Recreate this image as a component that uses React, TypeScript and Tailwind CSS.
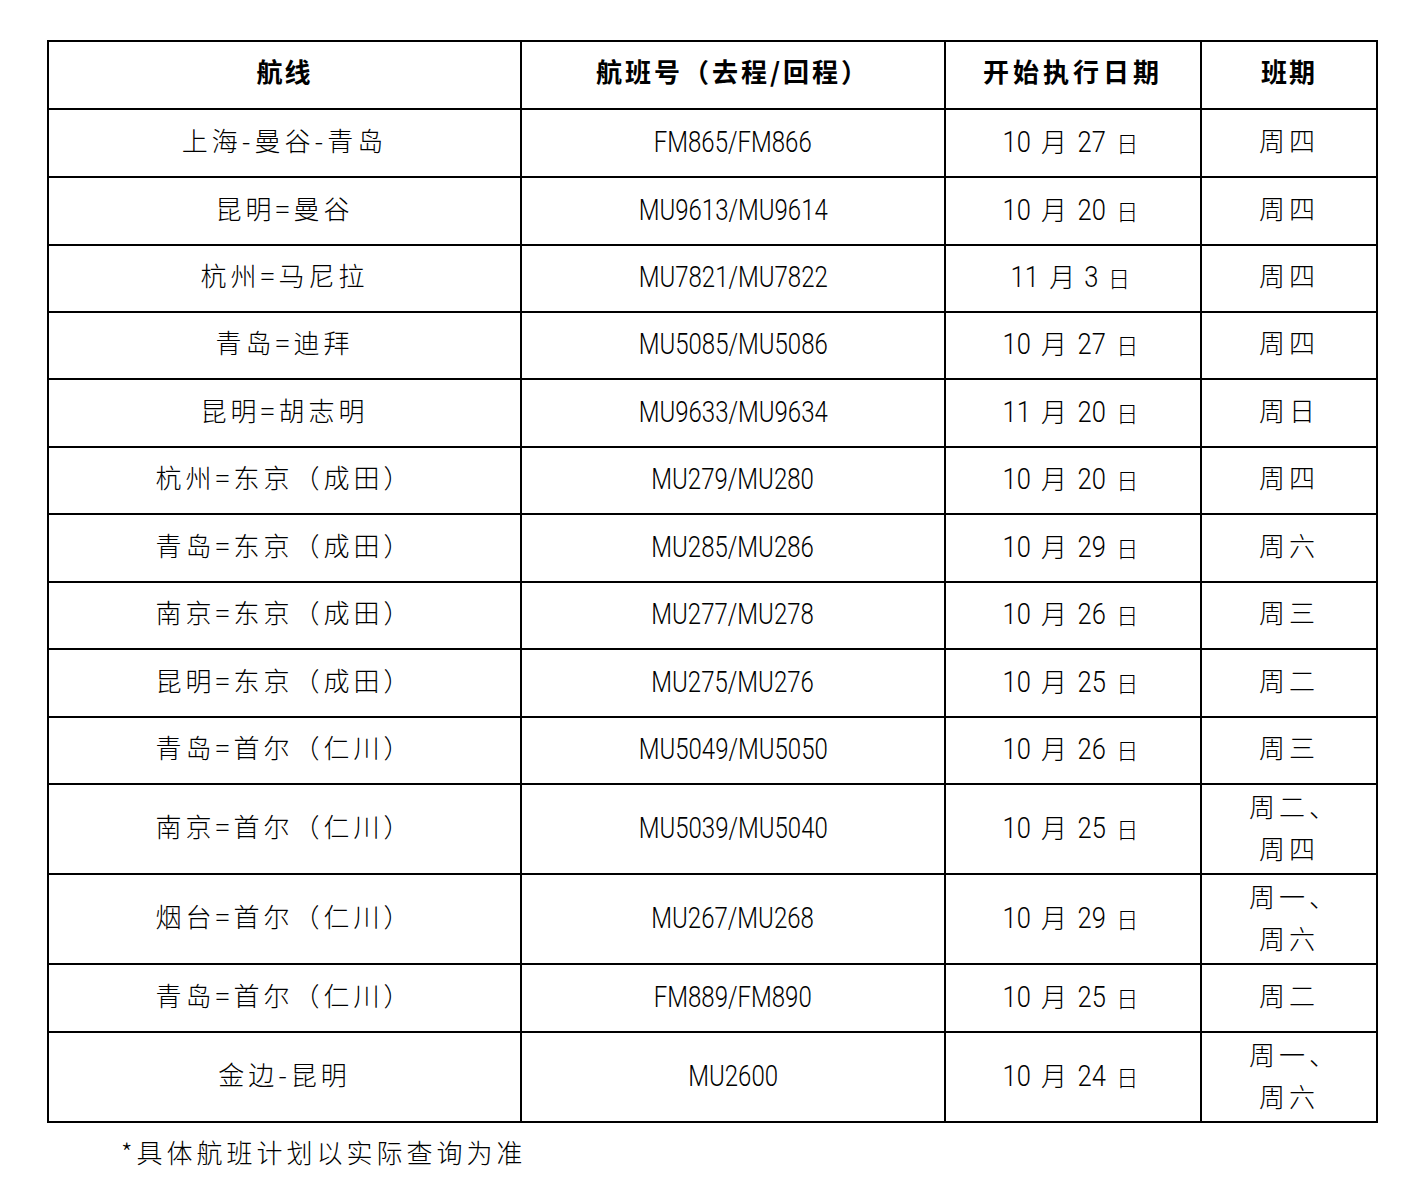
const rows: [string, string, string, string[], number][] = [
  ['上海-曼谷-青岛', 'FM865/FM866', '10 月 27 日', ['周四'], 68],
  ['昆明=曼谷', 'MU9613/MU9614', '10 月 20 日', ['周四'], 68],
  ['杭州=马尼拉', 'MU7821/MU7822', '11 月 3 日', ['周四'], 67],
  ['青岛=迪拜', 'MU5085/MU5086', '10 月 27 日', ['周四'], 67],
  ['昆明=胡志明', 'MU9633/MU9634', '11 月 20 日', ['周日'], 68],
  ['杭州=东京（成田）', 'MU279/MU280', '10 月 20 日', ['周四'], 67],
  ['青岛=东京（成田）', 'MU285/MU286', '10 月 29 日', ['周六'], 68],
  ['南京=东京（成田）', 'MU277/MU278', '10 月 26 日', ['周三'], 67],
  ['昆明=东京（成田）', 'MU275/MU276', '10 月 25 日', ['周二'], 68],
  ['青岛=首尔（仁川）', 'MU5049/MU5050', '10 月 26 日', ['周三'], 67],
  ['南京=首尔（仁川）', 'MU5039/MU5040', '10 月 25 日', ['周二、', '周四'], 90],
  ['烟台=首尔（仁川）', 'MU267/MU268', '10 月 29 日', ['周一、', '周六'], 90],
  ['青岛=首尔（仁川）', 'FM889/FM890', '10 月 25 日', ['周二'], 68],
  ['金边-昆明', 'MU2600', '10 月 24 日', ['周一、', '周六'], 90],
];

const cjk = "font-['Noto_Sans_CJK_SC',sans-serif]";
const num = "font-['Roboto','Liberation_Sans',sans-serif]";

export default function App() {
  return (
    <div className="min-h-[1186px] w-[1426px] bg-white pt-[40px] text-black">
      <table className="ml-[47px] w-[1331px] table-fixed border-collapse">
        <colgroup>
          <col className="w-[473px]" />
          <col className="w-[424px]" />
          <col className="w-[256px]" />
          <col className="w-[176px]" />
        </colgroup>
        <thead>
          <tr className={`h-[68px] text-[26px] font-medium ${cjk}`}>
            <th className="border-2 border-black pb-[10px] tracking-[2px]">航线</th>
            <th className="border-2 border-black pb-[10px] tracking-[3px]">航班号（去程/回程）</th>
            <th className="border-2 border-black pb-[10px] tracking-[4px]">开始执行日期</th>
            <th className="border-2 border-black pb-[10px] tracking-[2px]">班期</th>
          </tr>
        </thead>
        <tbody>
          {rows.map(([route, flight, date, days, h], i) => (
            <tr key={i} style={{ height: h }}>
              <td className={`border-2 border-black pb-[8px] text-center text-[26px] font-light tracking-[4px] ${cjk}`}>
                {route}
              </td>
              <td className={`border-2 border-black pb-[4px] text-center text-[30px] font-light ${num}`}>
                <span className="inline-block scale-x-[0.8]">{flight}</span>
              </td>
              <td className={`border-2 border-black pb-[4px] text-center text-[30px] font-light ${num}`}>
                {date.split(' ').map((p, j) =>
                  /\d/.test(p) ? (
                    <span key={j} className="inline-block scale-x-[0.85]">{p}</span>
                  ) : (
                    <span key={j} className={`mx-[8px] font-light ${cjk} ${p === '日' ? 'text-[22px]' : 'text-[26px]'}`}>
                      {p}
                    </span>
                  )
                )}
              </td>
              <td
                className={`border-2 border-black text-center text-[26px] font-light tracking-[4px] ${cjk} ${
                  days.length > 1 ? 'pb-[4px] leading-[42px]' : 'pb-[8px]'
                }`}
              >
                {days.map((d, j) => (
                  <div key={j} className={days.length > 1 && j === 0 ? 'pl-[10px]' : ''}>
                    {d}
                  </div>
                ))}
              </td>
            </tr>
          ))}
        </tbody>
      </table>
      <p className={`ml-[121px] mt-[9px] text-[26px] font-light tracking-[4px] ${cjk}`}>*具体航班计划以实际查询为准</p>
    </div>
  );
}
